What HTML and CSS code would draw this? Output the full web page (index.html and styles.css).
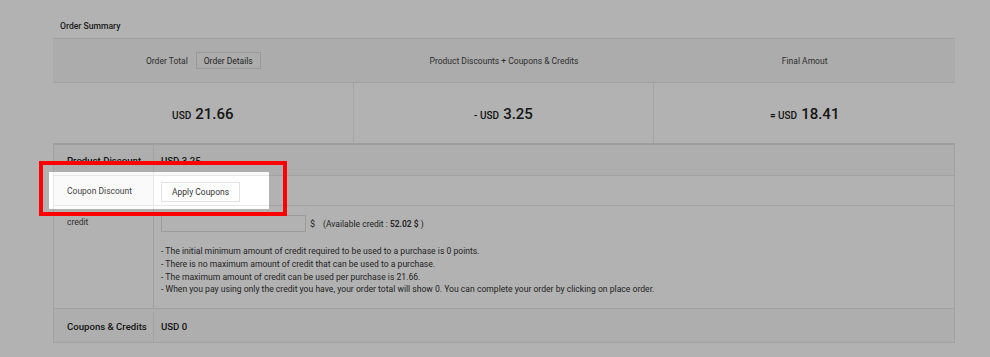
FILE: index.html
```html
<!DOCTYPE html>
<html lang="en">
<head>
    <meta charset="UTF-8">
    <meta name="viewport" content="width=device-width, initial-scale=1.0">
    <title>Order Summary</title>
    <link rel="stylesheet" href="styles.css">
</head>
<body>
    <section class="order">
        <h2 class="order-title">Order Summary</h2>

        <div class="summary-head">
            <div class="summary-cell">
                <span>Order Total</span>
                <button class="btn">Order Details</button>
            </div>
            <div class="summary-cell">Product Discounts + Coupons &amp; Credits</div>
            <div class="summary-cell">Final Amout</div>
        </div>

        <div class="summary-amounts">
            <div class="amount"><span class="cur">USD</span> 21.66</div>
            <div class="amount"><span class="cur">- USD</span> 3.25</div>
            <div class="amount"><span class="cur">= USD</span> 18.41</div>
        </div>

        <div class="detail">
            <div class="detail-row total">
                <div class="detail-label">Product Discount</div>
                <div class="detail-value">USD 3.25</div>
            </div>

            <div class="detail-row coupon">
                <div class="detail-label">Coupon Discount</div>
                <div class="detail-value">
                    <button class="btn btn-white">Apply Coupons</button>
                </div>
                <div class="spotlight"></div>
                <div class="spotlight-frame"></div>
            </div>

            <div class="detail-row">
                <div class="detail-label">credit</div>
                <div class="detail-value credit">
                    <div class="credit-line">
                        <input type="text" class="credit-input">
                        <span>$</span>
                        <span class="credit-avail">(Available credit : <strong>52.02 $</strong> )</span>
                    </div>
                    <ul class="notes">
                        <li>The initial minimum amount of credit required to be used to a purchase is 0 points.</li>
                        <li>There is no maximum amount of credit that can be used to a purchase.</li>
                        <li>The maximum amount of credit can be used per purchase is 21.66.</li>
                        <li>When you pay using only the credit you have, your order total will show 0. You can complete your order by clicking on place order.</li>
                    </ul>
                </div>
            </div>

            <div class="detail-row total">
                <div class="detail-label">Coupons &amp; Credits</div>
                <div class="detail-value">USD 0</div>
            </div>
        </div>
    </section>
</body>
</html>
```

FILE: styles.css
```css
html {
    box-sizing: border-box;
    font-family: Roboto, "Liberation Sans", sans-serif;
    font-size: 16px;
}

*,
*:before,
*:after {
    box-sizing: inherit;
}

body {
    margin: 0;
    min-height: 100vh;
    background-color: #fff;
    color: #333;
}

.order {
    width: 902px;
    margin-left: 53px;
    padding-top: 20px;
}

.order-title {
    margin: 0 0 6px;
    padding-left: 7px;
    font-size: 8.6px;
    font-weight: 500;
    line-height: 12px;
    color: #2a2a2a;
}

.btn {
    font-family: inherit;
    font-size: 8.5px;
    color: #333;
    height: 17px;
    padding: 0 7px;
    border: 1px solid #dcdcdc;
    background-color: #f7f7f7;
    cursor: pointer;
}

.btn-white {
    height: 20px;
    padding: 0 10px;
    margin-top: 2px;
    background-color: #fff;
    border-color: #e3e3e3;
}

.summary-head {
    display: grid;
    grid-template-columns: repeat(3, 1fr);
    height: 45px;
    background-color: #f7f7f7;
    border-top: 1px solid #e6e6e6;
    border-bottom: 1px solid #e6e6e6;
}

.summary-cell {
    display: flex;
    justify-content: center;
    align-items: center;
    gap: 8px;
    font-size: 8.5px;
    color: #444;
}

.summary-amounts {
    display: grid;
    grid-template-columns: repeat(3, 1fr);
    height: 60px;
}

.amount {
    display: flex;
    justify-content: center;
    align-items: center;
    gap: 4px;
    padding-top: 2px;
    font-size: 15px;
    font-weight: 500;
    color: #222;
    border-right: 1px solid #ececec;
}

.amount:last-child {
    border-right: 0;
}

.amount .cur {
    font-size: 10px;
    padding-top: 3px;
}

.detail {
    border: 1px solid #e8e8e8;
    border-top: 2px solid #e2e2e2;
}

.detail-row {
    display: grid;
    grid-template-columns: 100px 1fr;
    border-bottom: 1px solid #e8e8e8;
}

.detail-row:last-child {
    border-bottom: 0;
}

.detail-label {
    display: flex;
    align-items: center;
    padding-left: 13px;
    font-size: 8px;
    color: #333;
    background-color: #fafafa;
    border-right: 1px solid #e8e8e8;
}

.detail-value {
    display: flex;
    align-items: center;
    padding-left: 7px;
    font-size: 9.5px;
}

.total {
    background-color: #fafafa;
}

.total .detail-label,
.total .detail-value {
    font-size: 9.6px;
    font-weight: 500;
    color: #222;
}

.total:first-child {
    height: 31px;
}

.total:last-child {
    height: 33px;
    padding-top: 2px;
}

.coupon {
    position: relative;
    height: 30px;
    background-color: #fff;
}

.coupon .detail-label {
    font-size: 8.5px;
    color: #444;
}

.detail-row:nth-child(3) .detail-label {
    align-items: flex-start;
    padding-top: 11px;
    background-color: #fff;
    font-size: 8.5px;
    color: #444;
}

.credit {
    display: block;
    padding: 9px 7px 12px;
}

.credit-line {
    display: flex;
    align-items: center;
    gap: 4px;
    font-size: 9px;
    color: #333;
}

.credit-input {
    width: 145px;
    height: 17px;
    border: 1px solid #e0e0e0;
    background-color: #fff;
}

.credit-avail {
    margin-left: 4px;
    font-size: 8.5px;
}

.credit-avail strong {
    font-weight: 600;
}

.notes {
    list-style: none;
    margin: 13px 0 0;
    padding: 0;
    font-size: 8.6px;
    line-height: 12.8px;
    color: #333;
}

.notes li:before {
    content: "- ";
}

/* guide overlay */
.spotlight {
    position: absolute;
    left: -5px;
    top: -4px;
    width: 220px;
    height: 37px;
    z-index: 5;
    pointer-events: none;
    box-shadow: 0 0 0 2000px rgba(0, 0, 0, .3);
}

.spotlight-frame {
    position: absolute;
    left: -15px;
    top: -15px;
    width: 248px;
    height: 55px;
    z-index: 6;
    border: 4px solid #f00;
    pointer-events: none;
}
```
